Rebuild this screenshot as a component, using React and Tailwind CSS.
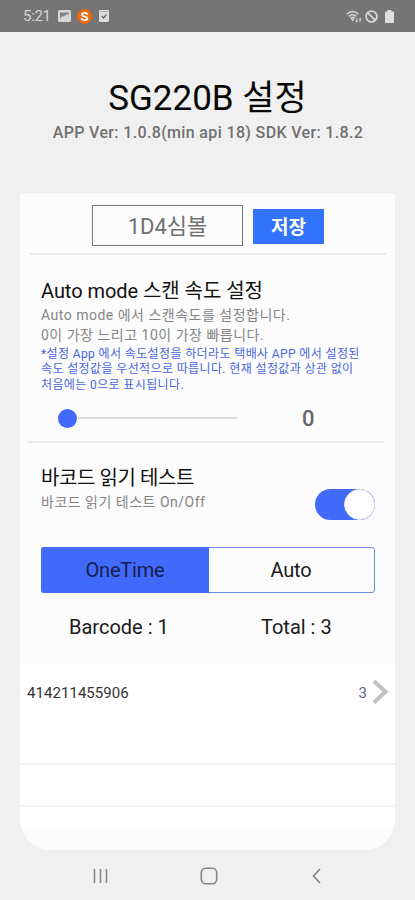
import React, { useState } from "react";

function StatusBar() {
    return (
        <div className="h-8 shrink-0 bg-[#757575] flex items-center justify-between pl-[23px] pr-[20px] text-[#d6d6d6]">
            <div className="flex items-center">
                <span className="w-[35px] text-[15px] leading-4 tracking-[-0.3px]">5:21</span>
                <svg width="13" height="12" viewBox="0 0 13 12">
                    <rect width="13" height="12" rx="1.5" fill="#d6d6d6" />
                    <path d="M2 9V2.500h9V5L8 4.500 6 7 4.500 6z" fill="#858585" />
                    <path d="M2 9l3-3 2 2 4-3.500V4L7 6z" fill="#d6d6d6" />
                </svg>
                <span className="ml-[6px] w-[15px] h-[15px] rounded-full bg-[#e8680c] text-white text-[13px] leading-[15px] font-bold text-center">S</span>
                <svg width="10" height="12" viewBox="0 0 10 12" className="ml-[7px]">
                    <rect width="10" height="12" rx="1" fill="#dcdcdc" />
                    <path d="M1 1.5h8" stroke="#8a8a8a" strokeWidth="0.6" />
                    <path d="M2.8 6l1.8 1.9L7.5 4.3" fill="none" stroke="#666" strokeWidth="1.3" />
                </svg>
            </div>
            <div className="flex items-center">
                <svg width="16" height="13" viewBox="0 0 16 13" fill="none" stroke="#d0d0d0">
                    <path d="M.8 4.2C4 .8 9.2.8 12.5 4.2M2.8 6.4c2.3-2.2 5.5-2.2 7.8 0M4.6 8.4c1.2-1.1 2.9-1.1 4.1 0" strokeWidth="1.6" />
                    <path d="M4.5 8.500l2.200 3L9 8.500z" fill="#d0d0d0" stroke="none" />
                    <path d="M11 8v4M9.6 10.5L11 12M14 12V8M14 8l1.2 1.5" strokeWidth="1.2" />
                </svg>
                <svg width="13" height="13" viewBox="0 0 13 13" className="ml-[3px]" fill="none" stroke="#d6d6d6" strokeWidth="1.8">
                    <circle cx="6.5" cy="6.5" r="5.4" />
                    <path d="M2.8 2.8l7.4 7.4" />
                </svg>
                <svg width="9" height="13" viewBox="0 0 9 13" className="ml-[7px] mr-px" fill="#dedede">
                    <path d="M2.5 0h4v1.5H8q1 0 1 1V12q0 1-1 1H1q-1 0-1-1V2.500q0-1 1-1h1.500z" />
                </svg>
            </div>
        </div>
    );
}

function NavBar() {
    return (
        <div className="flex-1 pt-[1px] px-[92px] flex items-center justify-between">
            <svg width="17" height="16" viewBox="0 0 17 16" stroke="#8b8b8b" strokeWidth="1.6">
                <path d="M2.500 1v14M8.500 1v14M14.500 1v14" />
            </svg>
            <svg width="18" height="18" viewBox="0 0 18 18" fill="none" stroke="#858585" strokeWidth="1.600" className="mr-[2px]">
                <rect x="1.300" y="1.300" width="15.400" height="15.400" rx="4.500" />
            </svg>
            <svg width="13" height="16" viewBox="0 0 13 16" fill="none" stroke="#858585" strokeWidth="1.700">
                <path d="M10 1L3.500 8l6.500 7" />
            </svg>
        </div>
    );
}

export default function App() {
    const [mode, setMode] = useState("OneTime");
    const [reading, setReading] = useState(true);

    return (
        <div className="w-full h-[900px] bg-[#f0f0f0] flex flex-col overflow-hidden font-['Roboto','Noto_Sans_CJK_KR',sans-serif]">
            <StatusBar />

            <div className="h-[161px] shrink-0 pt-[45px] text-center whitespace-nowrap">
                <h1 className="text-[35px] leading-[44px] text-[#080808]">SG220B 설정</h1>
                <p className="mt-[2px] pl-px text-[16px] leading-5 tracking-[0.350px] font-medium text-[#707070]">APP Ver: 1.0.8(min api 18) SDK Ver: 1.8.2</p>
            </div>

            <div className="mx-5 h-[657px] shrink-0 bg-[#fcfcfc] rounded-t-[4px] rounded-b-[30px] overflow-hidden whitespace-nowrap">
                <div className="ml-[10px] mr-[9px] h-[62px] border-b-2 border-[#ececec] flex items-start pt-3 pl-[62px]">
                    <div className="w-[151px] h-[41px] border-[1.500px] border-[#777] pt-[2px] flex items-center justify-center text-[22px] leading-none text-[#707070]">
                        1D4심볼
                    </div>
                    <button className="ml-[10px] mt-1 w-[71px] h-[35px] pt-px bg-[#3373fc] text-white text-[19px] leading-none font-bold">저장</button>
                </div>

                <div className="ml-[8px] mr-[11px] h-[188px] border-b-2 border-[#ebebeb] pl-[13px] pt-[23px]">
                    <h2 className="text-[20px] leading-[26px] tracking-[-0.050px] text-[#111]">Auto mode 스캔 속도 설정</h2>
                    <p className="mt-px text-[14px] leading-5 tracking-[0.500px] text-[#858585]">
                        Auto mode 에서 스캔속도를 설정합니다.<br />
                        0이 가장 느리고 10이 가장 빠릅니다.
                    </p>
                    <p className="mt-[2px] text-[12px] leading-[15.400px] tracking-[0.380px] text-[#4866e0]">
                        *설정 App 에서 속도설정을 하더라도 택배사 APP 에서 설정된<br />
                        속도 설정값을 우선적으로 따릅니다. 현재 설정값과 상관 없이<br />
                        처음에는 0으로 표시됩니다.
                    </p>
                    <div className="mt-[9.800px] flex items-center pl-[17px] h-[30px]">
                        <span className="w-[19px] h-[19px] rounded-full bg-[#4169fa]"></span>
                        <span className="w-[159px] h-[2px] ml-px bg-[#dadada]"></span>
                        <span className="ml-[65px] mt-[2px] text-[22px] leading-[30px] font-medium text-[#666]">0</span>
                    </div>
                </div>

                <div className="h-[221px] pt-[22px] pl-[21px] pr-5">
                    <div className="flex justify-between">
                        <div>
                            <h2 className="text-[20px] leading-[26px] tracking-[-0.400px] text-[#111]">바코드 읽기 테스트</h2>
                            <p className="text-[14px] leading-[22px] tracking-[0.500px] text-[#858585]">바코드 읽기 테스트 On/Off</p>
                        </div>
                        <button onClick={() => setReading(!reading)} className={`mt-[24px] w-[60px] h-[31px] rounded-full flex ${reading ? "bg-[#4169fa] justify-end" : "bg-[#d0d0d0] justify-start"}`}>
                            <span className="w-[31px] h-[31px] rounded-full bg-white border border-[#e8e8e8]"></span>
                        </button>
                    </div>
                    <div className="mt-[27px] h-[46px] flex border-[1.500px] border-[#7089e0] rounded-[3px] text-[20px] tracking-[-0.200px] text-[#1a1a1a]">
                        <button onClick={() => setMode("OneTime")} className={`w-[168px] -m-px rounded-l-[3px] ${mode === "OneTime" ? "bg-[#4169fa] text-[#15204e]" : ""}`}>OneTime</button>
                        <button onClick={() => setMode("Auto")} className={`flex-1 ${mode === "Auto" ? "bg-[#4169fa] text-[#15204e]" : ""}`}>Auto</button>
                    </div>
                    <div className="mt-[21px] flex text-[20px] leading-[26px] text-[#1a1a1a]">
                        <span className="w-[193px] pl-[28px]">Barcode : 1</span>
                        <span className="pl-[27px]">Total : 3</span>
                    </div>
                </div>

                <div className="h-[164px] bg-white">
                    <div className="h-[101px] border-b-2 border-[#f0f0f0] pl-[7px] pr-[6px] pt-[12px] flex items-start">
                        <span className="flex-1 pt-[7px] text-[15px] leading-5 tracking-[0.050px] text-[#333]">414211455906</span>
                        <span className="pt-[7px] text-[15px] leading-5 text-[#62628e]">3</span>
                        <svg width="17" height="26" viewBox="0 0 17 26" className="ml-[5px] mt-[3px]" fill="none" stroke="#c2c2c2" strokeWidth="4">
                            <path d="M2 2L13.500 12.800 2 23.500" />
                        </svg>
                    </div>
                    <div className="h-[42px] border-b-2 border-[#f4f4f4]"></div>
                </div>
            </div>

            <NavBar />
        </div>
    );
}
